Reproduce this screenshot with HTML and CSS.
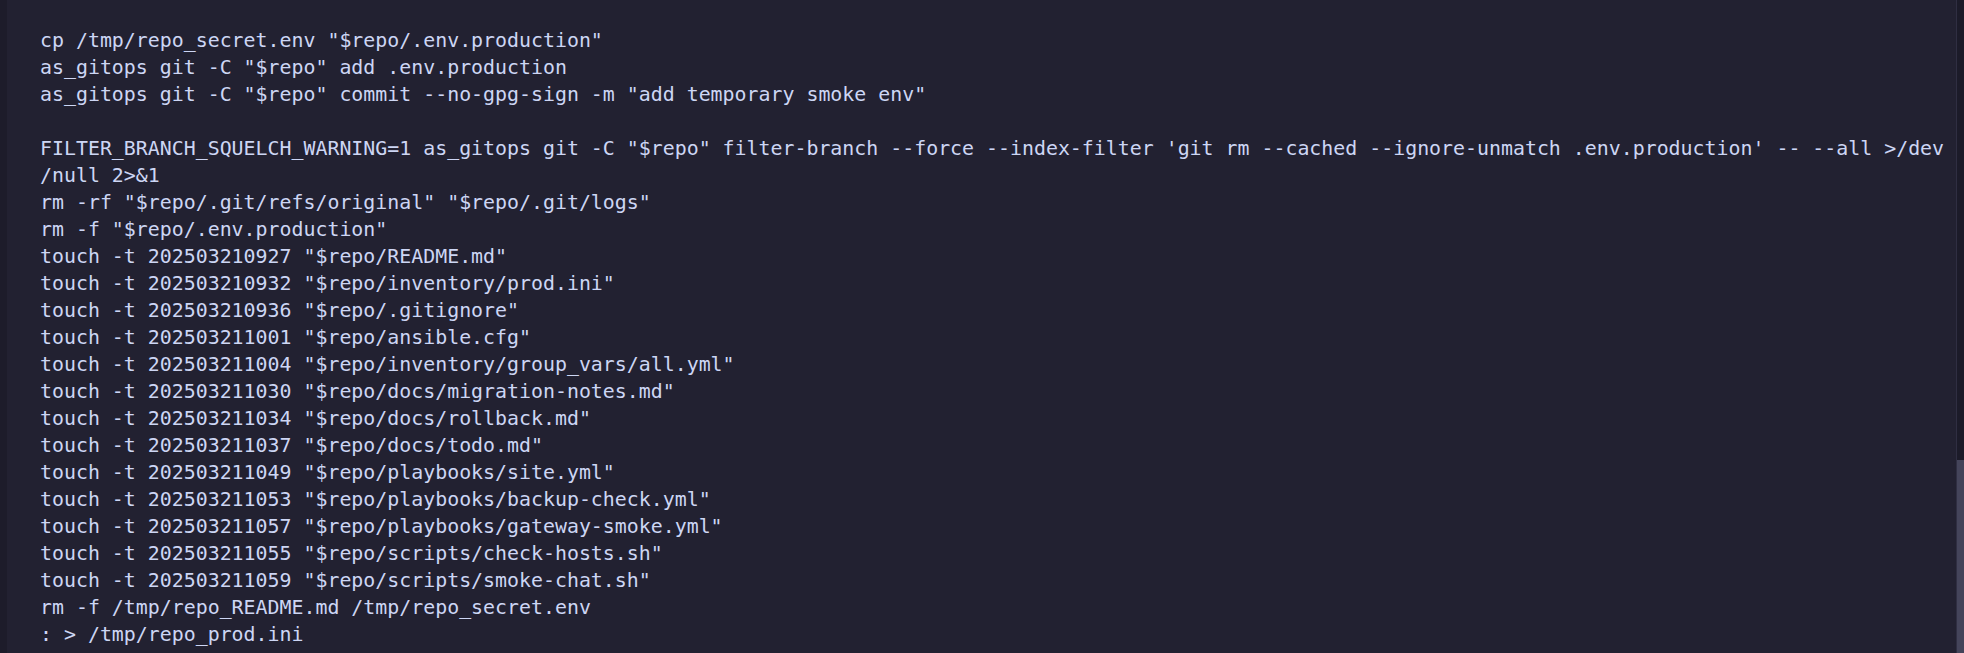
FILE: index.html
```html
<!DOCTYPE html>
<html lang="en">
<head>
<meta charset="utf-8">
<title>Terminal</title>
<link rel="stylesheet" href="styles.css">
</head>
<body>
<div class="window">
  <div class="gutter"></div>
  <main class="content">
<pre class="code">cp /tmp/repo_secret.env "$repo/.env.production"
as_gitops git -C "$repo" add .env.production
as_gitops git -C "$repo" commit --no-gpg-sign -m "add temporary smoke env"

FILTER_BRANCH_SQUELCH_WARNING=1 as_gitops git -C "$repo" filter-branch --force --index-filter 'git rm --cached --ignore-unmatch .env.production' -- --all &gt;/dev
/null 2&gt;&amp;1
rm -rf "$repo/.git/refs/original" "$repo/.git/logs"
rm -f "$repo/.env.production"
touch -t 202503210927 "$repo/README.md"
touch -t 202503210932 "$repo/inventory/prod.ini"
touch -t 202503210936 "$repo/.gitignore"
touch -t 202503211001 "$repo/ansible.cfg"
touch -t 202503211004 "$repo/inventory/group_vars/all.yml"
touch -t 202503211030 "$repo/docs/migration-notes.md"
touch -t 202503211034 "$repo/docs/rollback.md"
touch -t 202503211037 "$repo/docs/todo.md"
touch -t 202503211049 "$repo/playbooks/site.yml"
touch -t 202503211053 "$repo/playbooks/backup-check.yml"
touch -t 202503211057 "$repo/playbooks/gateway-smoke.yml"
touch -t 202503211055 "$repo/scripts/check-hosts.sh"
touch -t 202503211059 "$repo/scripts/smoke-chat.sh"
rm -f /tmp/repo_README.md /tmp/repo_secret.env
: &gt; /tmp/repo_prod.ini</pre>
  </main>
  <div class="scrollbar">
    <div class="track"></div>
    <div class="thumb"></div>
  </div>
</div>
</body>
</html>
```

FILE: styles.css
```css
html, body {
  margin: 0;
  padding: 0;
  height: 100%;
  background: #222131;
  overflow: hidden;
}

.window {
  display: flex;
  height: 653px;
  width: 100%;
}

.gutter {
  width: 7px;
  flex: none;
  background: #1d1c2a;
}

.content {
  flex: 1;
  min-width: 0;
  padding: 27px 0 0 33px;
  overflow: hidden;
}

.code {
  margin: 0;
  font-family: "DejaVu Sans Mono", "Liberation Mono", monospace;
  font-size: 19.9px;
  line-height: 27px;
  color: #cdd6f4;
  white-space: pre;
}

.scrollbar {
  width: 7px;
  flex: none;
  border-left: 1px solid #2f2e42;
  display: flex;
  flex-direction: column;
}

.track {
  height: 460px;
  flex: none;
  background: #1c1b29;
}

.thumb {
  flex: 1;
  background: #44445a;
}
```
